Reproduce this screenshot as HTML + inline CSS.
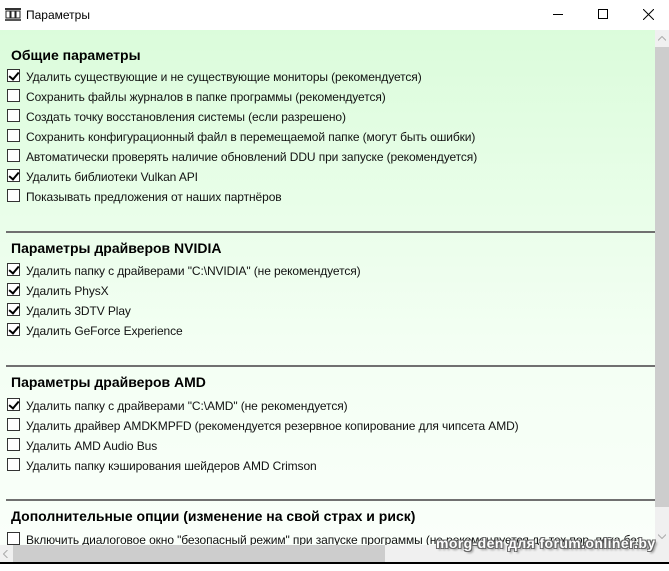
<!DOCTYPE html>
<html><head><meta charset="utf-8"><style>
*{margin:0;padding:0;box-sizing:border-box}
body{width:669px;height:571px;overflow:hidden;background:#fff;font-family:"Liberation Sans",sans-serif;position:relative}
.title{position:absolute;left:0;top:0;width:669px;height:30px;background:#fff}
.title span{position:absolute;left:26px;top:8px;font-size:12px;color:#000}
.content{position:absolute;left:0;top:30px;width:655px;height:515px;background:linear-gradient(#dbfcdb,#f3fff3 60%,#fafffa);overflow:hidden}
.h{position:absolute;left:11px;font-size:14px;font-weight:bold;color:#000;white-space:nowrap}
.i{position:absolute;left:26px;font-size:12px;color:#111;white-space:nowrap;margin-top:1px;letter-spacing:-0.1px}
.cb{position:absolute;left:7px;width:13px;height:13px;border:1px solid #333;background:#fff}
.cb.c::after{content:"";position:absolute;left:3px;top:0px;width:4px;height:8px;border-right:2px solid #000;border-bottom:2px solid #000;transform:rotate(40deg)}
.sep{position:absolute;left:6px;width:649px;height:2px;background:#707070}
.vs{position:absolute;left:655px;top:30px;width:14px;height:532px;background:#f0f0f0}
.hs{position:absolute;left:0;top:545px;width:655px;height:17px;background:#f0f0f0}
</style></head><body>
<div class="title">
<svg style="position:absolute;left:5px;top:8px" width="16" height="14"><rect x="0" y="0" width="16" height="2" fill="#333"/><rect x="1" y="3" width="4" height="7" fill="none" stroke="#222"/><rect x="6" y="3" width="4" height="7" fill="none" stroke="#222"/><rect x="11" y="3" width="4" height="7" fill="none" stroke="#222"/><rect x="0" y="11" width="16" height="2" fill="#555"/></svg>
<span>Параметры</span>
<div style="position:absolute;left:553px;top:14px;width:10px;height:1px;background:#000"></div>
<div style="position:absolute;left:598px;top:9px;width:10px;height:10px;border:1px solid #000"></div>
<svg style="position:absolute;left:643px;top:9px" width="11" height="11"><path d="M0 0L11 11M11 0L0 11" stroke="#000" stroke-width="1"/></svg>
</div>
<div class="content">
<div class="h" style="top:17px">Общие параметры</div>
<div class="cb c" style="top:39px"></div><div class="i" style="top:39px">Удалить существующие и не существующие мониторы (рекомендуется)</div>
<div class="cb" style="top:59px"></div><div class="i" style="top:59px">Сохранить файлы журналов в папке программы (рекомендуется)</div>
<div class="cb" style="top:79px"></div><div class="i" style="top:79px">Создать точку восстановления системы (если разрешено)</div>
<div class="cb" style="top:99px"></div><div class="i" style="top:99px">Сохранить конфигурационный файл в перемещаемой папке (могут быть ошибки)</div>
<div class="cb" style="top:119px"></div><div class="i" style="top:119px">Автоматически проверять наличие обновлений DDU при запуске (рекомендуется)</div>
<div class="cb c" style="top:139px"></div><div class="i" style="top:139px">Удалить библиотеки Vulkan API</div>
<div class="cb" style="top:159px"></div><div class="i" style="top:159px">Показывать предложения от наших партнёров</div>
<div class="sep" style="top:201px"></div>
<div class="h" style="top:210px">Параметры драйверов NVIDIA</div>
<div class="cb c" style="top:233px"></div><div class="i" style="top:233px">Удалить папку с драйверами "C:\NVIDIA" (не рекомендуется)</div>
<div class="cb c" style="top:253px"></div><div class="i" style="top:253px">Удалить PhysX</div>
<div class="cb c" style="top:273px"></div><div class="i" style="top:273px">Удалить 3DTV Play</div>
<div class="cb c" style="top:293px"></div><div class="i" style="top:293px">Удалить GeForce Experience</div>
<div class="sep" style="top:335px"></div>
<div class="h" style="top:344px">Параметры драйверов AMD</div>
<div class="cb c" style="top:368px"></div><div class="i" style="top:368px">Удалить папку с драйверами "C:\AMD" (не рекомендуется)</div>
<div class="cb" style="top:388px"></div><div class="i" style="top:388px">Удалить драйвер AMDKMPFD (рекомендуется резервное копирование для чипсета AMD)</div>
<div class="cb" style="top:408px"></div><div class="i" style="top:408px">Удалить AMD Audio Bus</div>
<div class="cb" style="top:428px"></div><div class="i" style="top:428px">Удалить папку кэширования шейдеров AMD Crimson</div>
<div class="sep" style="top:469px"></div>
<div class="h" style="top:478px">Дополнительные опции (изменение на свой страх и риск)</div>
<div class="cb" style="top:502px"></div><div class="i" style="top:502px">Включить диалоговое окно "безопасный режим" при запуске программы (не рекомендуется до тех пор, пока без</div>
</div>
<div class="vs">
<div style="position:absolute;left:0;top:17px;width:14px;height:460px;background:#cdcdcd"></div>
<svg style="position:absolute;left:3px;top:6px" width="8" height="5"><path d="M0 4.5L4 0.5L8 4.5" stroke="#aaa" fill="none"/></svg>
<svg style="position:absolute;left:3px;top:504px" width="8" height="5"><path d="M0 0.5L4 4.5L8 0.5" stroke="#aaa" fill="none"/></svg>
</div>
<div class="hs">
<div style="position:absolute;left:13px;top:0;width:372px;height:17px;background:#cdcdcd"></div>
<svg style="position:absolute;left:3px;top:5px" width="5" height="8"><path d="M4.5 0L0.5 4L4.5 8" stroke="#aaa" fill="none"/></svg>
</div>
<div style="position:absolute;left:0;top:562px;width:669px;height:2px;background:#000"></div>
<div style="position:absolute;left:436px;top:535px;font-size:14px;font-weight:bold;letter-spacing:0.4px;color:#fff;text-shadow:1px 1px 0 #666,-1px -1px 0 #666,1px -1px 0 #666,-1px 1px 0 #666,2px 2px 2px #888;white-space:nowrap">morg-den для forum.onliner.by</div>
</body></html>
